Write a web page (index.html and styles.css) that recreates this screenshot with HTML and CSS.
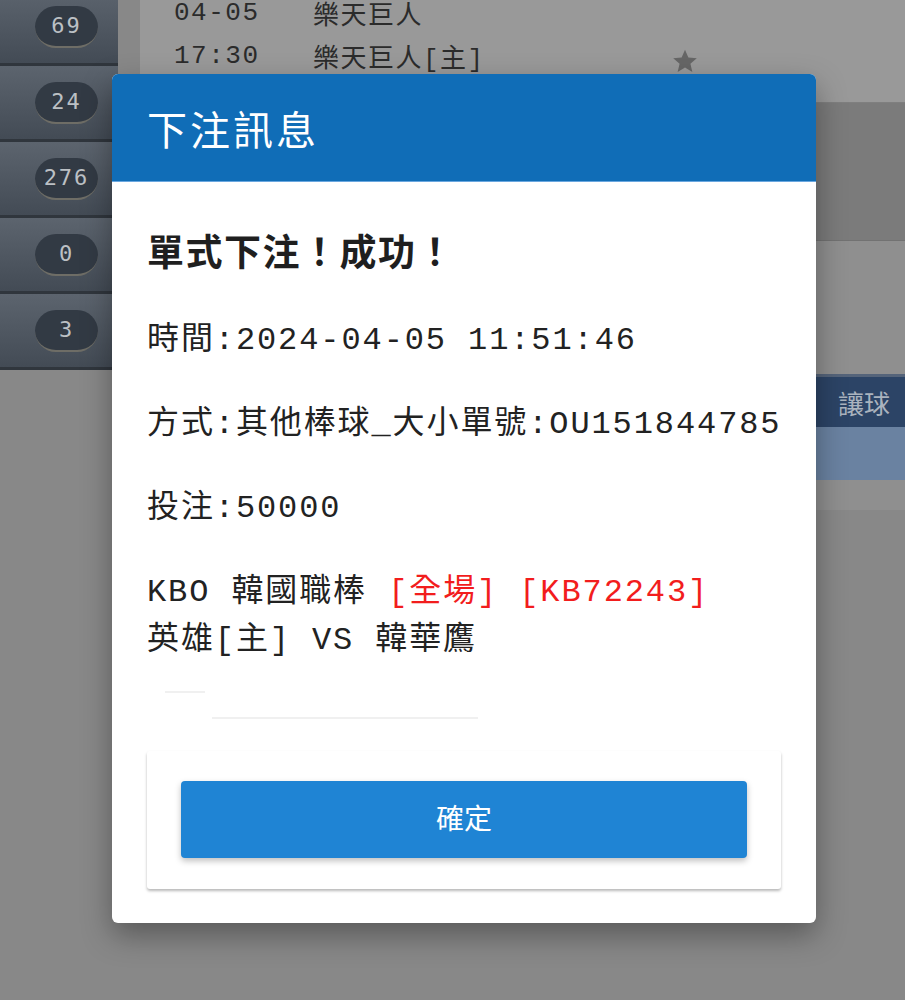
FILE: index.html
```html
<!DOCTYPE html>
<html lang="zh-Hant">
<head>
<meta charset="utf-8">
<title>下注訊息</title>
<link rel="stylesheet" href="styles.css">
</head>
<body>
<div class="page">
  <aside class="sidebar">
    <div class="side-row"><span class="badge">69</span></div>
    <div class="side-row"><span class="badge">24</span></div>
    <div class="side-row"><span class="badge">276</span></div>
    <div class="side-row"><span class="badge">0</span></div>
    <div class="side-row"><span class="badge">3</span></div>
  </aside>
  <main class="main">
    <section class="game">
      <div class="game-row"><span class="g-time">04-05</span><span class="g-team">樂天巨人</span></div>
      <div class="game-row"><span class="g-time">17:30</span><span class="g-team">樂天巨人[主]</span>
        <svg class="star" viewBox="0 0 24 24" width="26" height="26"><path d="M12 1.5l3.1 7.2 7.8.7-5.9 5.1 1.8 7.6L12 18.1l-6.8 4 1.8-7.6L1.1 9.4l7.8-.7z" fill="#666"/></svg>
      </div>
    </section>
    <section class="band-dark"></section>
    <section class="band-light"></section>
    <section class="tbl-head"><span>讓球</span></section>
    <section class="tbl-row"></section>
    <section class="band-gap"></section>
  </main>
</div>

<div class="modal">
  <header class="modal-head">下注訊息</header>
  <div class="modal-body">
    <h3 class="result">單式下注！成功！</h3>
    <p class="line">時間:2024-04-05 11:51:46</p>
    <p class="line">方式:其他棒球_大小單號:OU151844785</p>
    <p class="line">投注:50000</p>
    <p class="line match">KBO 韓國職棒 <span class="red">[全場]</span> <span class="red">[KB72243]</span><br>英雄[主] VS 韓華鷹</p>
    <div class="faint">
      <i class="f1"></i>
      <i class="f2"></i>
    </div>
    <div class="btn-card">
      <button class="btn">確定</button>
    </div>
  </div>
</div>
</body>
</html>
```

FILE: styles.css
```css
html, body {
  margin: 0;
  padding: 0;
  height: 100%;
  overflow: hidden;
}
body {
  background: #888888;
  font-family: "Liberation Mono", "Noto Sans CJK TC", monospace;
  position: relative;
}
.page {
  display: flex;
  margin-top: -10px;
}
.sidebar {
  width: 118px;
  flex: none;
  display: flex;
  flex-direction: column;
}
.side-row {
  height: 73px;
  border-bottom: 3px solid #30363d;
  background: linear-gradient(#5c646e, #434b55);
  display: flex;
  align-items: center;
  justify-content: flex-end;
  padding-right: 20px;
}
.badge {
  width: 63px;
  height: 40px;
  border-radius: 21px;
  background: #323a44;
  border-bottom: 2px solid #6e6d66;
  color: #bcc0c4;
  font-family: "DejaVu Sans Mono", monospace;
  font-size: 22px;
  letter-spacing: 2px;
  display: flex;
  align-items: center;
  justify-content: center;
}
.main {
  flex: 1;
  margin-left: 22px;
  display: flex;
  flex-direction: column;
}
.game {
  height: 111px;
  background: #999999;
  border-bottom: 1px solid #7f7f7f;
  padding-left: 34px;
  padding-top: 1px;
}
.game-row {
  display: flex;
  align-items: center;
  height: 43px;
  font-size: 26px;
  letter-spacing: 1.5px;
  color: #2b2b2b;
}
.g-time { width: 139px; }
.g-team { width: 359px; }
.star { margin-top: 10px; }
.band-dark {
  height: 137px;
  background: #7b7b7b;
  border-bottom: 1px solid #727272;
}
.band-light {
  height: 133px;
  background: #8f8f8f;
  border-bottom: 3px solid #55647a;
}
.tbl-head {
  height: 50px;
  background: #2c4466;
  display: flex;
  justify-content: flex-end;
  align-items: center;
  padding-right: 15px;
  color: #aab3be;
  font-family: "Noto Sans CJK TC", sans-serif;
  font-size: 26px;
}
.tbl-row {
  height: 53px;
  background: #6a82a1;
}
.band-gap {
  height: 30px;
  background: #8f8f8f;
}

/* modal */
.modal {
  position: absolute;
  left: 112px;
  top: 74px;
  width: 704px;
  background: #ffffff;
  border-radius: 6px;
  box-shadow: 0 12px 30px rgba(0, 0, 0, 0.35);
  overflow: hidden;
}
.modal-head {
  height: 107px;
  background: #106db7;
  border-bottom: 1px solid #6aa7df;
  color: #ffffff;
  font-family: "Noto Sans CJK TC", sans-serif;
  font-size: 40px;
  letter-spacing: 3px;
  padding-left: 35px;
  display: flex;
  align-items: center;
}
.modal-body {
  padding: 44px 35px 34px;
  color: #222222;
}
.result {
  margin: 0 0 43px;
  font-family: "Noto Sans CJK TC", sans-serif;
  font-size: 37px;
  font-weight: 600;
  letter-spacing: 1.5px;
  line-height: 48px;
  color: #1f1f1f;
}
.line {
  margin: 0 0 36px;
  font-size: 32px;
  letter-spacing: 1.9px;
  line-height: 48px;
  white-space: nowrap;
}
.match { margin-bottom: 0; }
.red { color: #f21d1d; }
.faint {
  height: 60px;
}
.faint i {
  display: block;
  height: 2px;
  background: #f0f0f0;
}
.f1 { width: 40px; margin: 26px 0 0 18px; }
.f2 { width: 266px; margin: 24px 0 0 65px; }
.btn-card {
  background: #ffffff;
  border-radius: 3px;
  box-shadow: 0 2px 3px rgba(0, 0, 0, 0.28);
  padding: 30px 34px 31px;
}
.btn {
  display: block;
  width: 100%;
  height: 77px;
  border: 0;
  border-radius: 4px;
  background: #1f84d4;
  color: #ffffff;
  font-family: "Noto Sans CJK TC", sans-serif;
  font-size: 28px;
  font-weight: 400;
  padding-bottom: 6px;
  box-shadow: 0 3px 6px rgba(0, 0, 0, 0.25);
}
```
